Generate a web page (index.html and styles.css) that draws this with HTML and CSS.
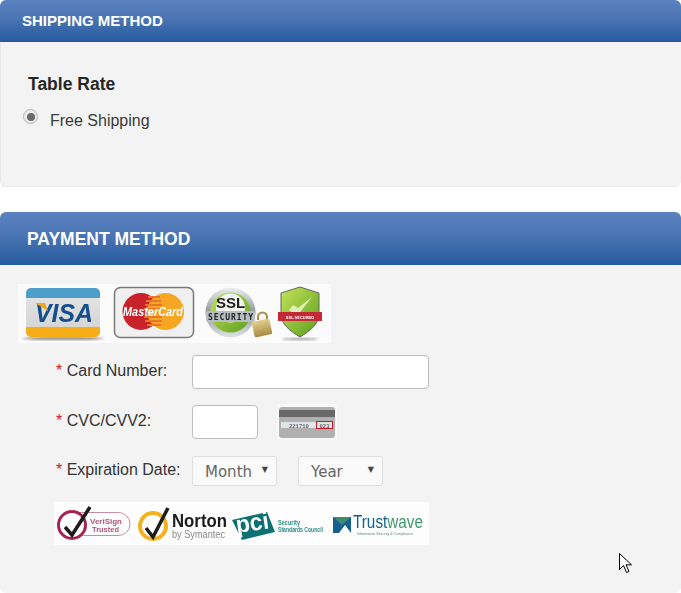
FILE: index.html
```html
<!DOCTYPE html>
<html lang="en">
<head>
<meta charset="utf-8">
<title>Checkout</title>
<link rel="stylesheet" href="styles.css">
</head>
<body>
<section class="panel shipping">
  <h2 class="head head-ship">SHIPPING METHOD</h2>
  <div class="ship-body">
    <h3 class="rate">Table Rate</h3>
    <label class="ship-option"><span class="radio"><span class="radio-dot"></span></span>Free Shipping</label>
  </div>
</section>
<section class="panel payment">
  <h2 class="head head-pay">PAYMENT METHOD</h2>
  <div class="pay-body">
    <svg class="badges" width="313" height="59" viewBox="0 0 313 59">
      <defs>
        <linearGradient id="vg" x1="0" y1="0" x2="0" y2="1"><stop offset="0" stop-color="#e6e6e6"/><stop offset="1" stop-color="#d2d2d2"/></linearGradient>
        <linearGradient id="sg" x1="0" y1="0" x2="1" y2="1"><stop offset="0" stop-color="#c4e45a"/><stop offset="1" stop-color="#5c9e1e"/></linearGradient>
        <linearGradient id="rg" x1="0" y1="0" x2="0" y2="1"><stop offset="0" stop-color="#eef0f0"/><stop offset="0.5" stop-color="#8e979c"/><stop offset="1" stop-color="#dfe3e4"/></linearGradient>
        <linearGradient id="lg" x1="0" y1="0" x2="0" y2="1"><stop offset="0" stop-color="#e4cf8c"/><stop offset="1" stop-color="#a98b45"/></linearGradient>
        <filter id="b1" x="-5%" y="-5%" width="110%" height="110%"><feGaussianBlur stdDeviation="0.4"/></filter>
        <filter id="b2"><feGaussianBlur stdDeviation="1"/></filter>
      </defs>
      <rect width="313" height="59" fill="#fbfbfb"/>
      <ellipse cx="45" cy="54.500" rx="41" ry="1.600" fill="#8c8c8c" filter="url(#b2)"/>
      <g filter="url(#b1)">
        <rect x="8" y="4" width="74" height="49" rx="5" fill="url(#vg)"/>
        <path d="M8 14V9a5 5 0 0 1 5-5h64a5 5 0 0 1 5 5v5z" fill="#4f9dc9"/>
        <path d="M8 43h74v5a5 5 0 0 1-5 5H13a5 5 0 0 1-5-5z" fill="#f6ad16"/>
        <text x="17" y="38" textLength="58" lengthAdjust="spacingAndGlyphs" class="visa">VISA</text>
        <path d="M17 19h10l3 8z" fill="#eda526"/>
        <rect x="96.500" y="3.500" width="79" height="50" rx="6" fill="#f0f0f0" stroke="#7a7a7a" stroke-width="1.500"/>
        <circle cx="123" cy="27.500" r="18.500" fill="#c8202b"/>
        <circle cx="147.500" cy="27.500" r="18.500" fill="#f5a623"/>
        <path d="M130 13h12M128 17h15M127 21h17M126 25h18M126 33h18M127 37h17M129 41h14" stroke="#e8752a" stroke-width="2"/>
        <text x="105" y="32" textLength="60" lengthAdjust="spacingAndGlyphs" class="mc">MasterCard</text>
        <circle cx="212.500" cy="28.500" r="25" fill="url(#rg)"/>
        <circle cx="212.500" cy="28.500" r="20" fill="url(#sg)"/>
        <circle cx="212.500" cy="24" r="14.500" fill="#f2f4f0"/>
        <text x="212.500" y="24" text-anchor="middle" class="ssl">SSL</text>
        <rect x="188" y="27" width="49" height="11" rx="2" fill="#b6bec2"/>
        <text x="190" y="36" textLength="45" class="sec">SECURITY</text>
        <path d="M240 36v-3a4.500 4.500 0 0 1 9 0v3" fill="none" stroke="#a98b45" stroke-width="2"/>
        <rect x="235" y="36" width="18" height="16" rx="2" fill="url(#lg)" transform="rotate(-12 244 44)"/>
        <path d="M263 9l19-6 19 6v21c0 10-9 17-19 23-10-6-19-13-19-23z" fill="url(#sg)" stroke="#5d6a58" stroke-width="1"/>
        <path d="M271 26l8 6 15-19-14 11-5-3z" fill="#e0f0b4"/>
        <path d="M260 28h44v9h-44z" fill="#c32a35"/>
        <text x="282" y="34.500" text-anchor="middle" class="ssltag">SSL SECURED</text>
      </g>
      <ellipse cx="282" cy="55" rx="18" ry="1" fill="#9a9a9a" filter="url(#b2)"/>
    </svg>
    <div class="form-row row-card">
      <label class="field-label"><span class="req">*</span> Card Number:</label>
      <span class="input input-wide"></span>
    </div>
    <div class="form-row row-cvc">
      <label class="field-label"><span class="req">*</span> CVC/CVV2:</label>
      <span class="input input-short"></span>
      <svg class="cvv-card" width="60" height="36" viewBox="0 0 60 36">
        <rect width="60" height="36" fill="#f8f8f8"/>
        <g filter="url(#b1)">
          <rect x="2" y="3" width="56" height="31" rx="3" fill="#b0b0b0"/>
          <rect x="2" y="6" width="56" height="7" fill="#686868"/>
          <rect x="4" y="18" width="35" height="6" fill="#dfe6ea"/>
          <text x="12" y="23.500" class="cvv-num">221710</text>
          <rect x="39.500" y="17.500" width="16" height="7" fill="#e3e3e3" stroke="#c21c2c" stroke-width="1"/>
          <text x="47.500" y="23.500" text-anchor="middle" class="cvv-num">023</text>
        </g>
      </svg>
    </div>
    <div class="form-row row-exp">
      <label class="field-label"><span class="req">*</span> Expiration Date:</label>
      <span class="select select-month">Month<span class="caret">▼</span></span>
      <span class="select select-year">Year<span class="caret">▼</span></span>
    </div>
    <svg class="trust" width="375" height="43" viewBox="0 0 375 43">
      <rect width="375" height="43" fill="#fdfdfd"/>
      <g filter="url(#b1)">
        <rect x="12" y="10.500" width="64" height="23" rx="11.500" fill="#fff" stroke="#c88ca0" stroke-width="1"/>
        <circle cx="18" cy="23" r="13.500" fill="#fff" stroke="#a3264f" stroke-width="3"/>
        <path d="M11 25l7 8 18-28" fill="none" stroke="#1c1c1c" stroke-width="3.500"/>
        <text x="36" y="22" textLength="32" lengthAdjust="spacingAndGlyphs" class="vs">VeriSign</text>
        <text x="38" y="30" textLength="27" lengthAdjust="spacingAndGlyphs" class="vs">Trusted</text>
        <circle cx="99" cy="24" r="13" fill="#fff" stroke="#f4b223" stroke-width="4"/>
        <path d="M92 26l7 9 15-29" fill="none" stroke="#1c1c1c" stroke-width="3.500"/>
        <text x="118" y="25" textLength="55" lengthAdjust="spacingAndGlyphs" class="norton">Norton</text>
        <text x="118" y="36" textLength="53" lengthAdjust="spacingAndGlyphs" class="sym">by Symantec</text>
        <path d="M178 18l35-8 8 20-33 8z" fill="#0f6f72"/>
        <text x="183" y="31" transform="rotate(-8 183 31)" textLength="33" lengthAdjust="spacingAndGlyphs" class="pci">pci</text>
        <text x="224" y="23" textLength="22" lengthAdjust="spacingAndGlyphs" class="ssc">Security</text>
        <text x="224" y="30" textLength="45" lengthAdjust="spacingAndGlyphs" class="ssc">Standards Council</text>
        <rect x="279" y="15" width="18" height="16" fill="#14618f"/>
        <path d="M279 15h18l-9 8z" fill="#3f8a6d"/>
        <path d="M285 31l6-8 6 8z" fill="#fff"/>
        <text x="299" y="26" textLength="70" lengthAdjust="spacingAndGlyphs" class="tw">Trust<tspan class="tw-wave">wave</tspan></text>
        <text x="303" y="33" textLength="56" lengthAdjust="spacingAndGlyphs" class="tw-sub">Information Security &amp; Compliance</text>
      </g>
    </svg>
  </div>
</section>
<svg class="cursor" width="13" height="21" viewBox="0 0 13 21">
  <path d="M0.500 0.500V16.500L4.500 12.500L7.500 19.500L10 18.500L7 11.800H12.500Z" fill="#fff" stroke="#000" stroke-width="1"/>
</svg>
</body>
</html>
```
FILE: styles.css
```css
* {
  box-sizing: border-box;
}

html,
body {
  margin: 0;
  padding: 0;
  height: 593px;
  overflow: hidden;
  background: #fff;
}

body {
  font-family: "Liberation Sans", Arial, sans-serif;
  color: #333;
}

.panel {
  background: #f3f3f3;
  border-radius: 6px;
  overflow: hidden;
}

.shipping {
  height: 187px;
  margin-bottom: 25px;
}

.payment {
  height: 381px;
}

.head {
  margin: 0;
  color: #fff;
  font-weight: 700;
  background: linear-gradient(to bottom, #5c82c0 0%, #4a74b3 45%, #245b9e 100%);
}

.head-ship {
  height: 42px;
  padding: 13px 0 0 22px;
  font-size: 15px;
  line-height: 16px;
}

.head-pay {
  height: 53px;
  padding: 18px 0 0 27px;
  font-size: 17.500px;
  line-height: 18px;
}

.ship-body {
  height: 145px;
  padding: 32px 0 0 22px;
  border-left: 1px solid #e8e8e8;
  border-bottom: 1px solid #e8e8e8;
  border-bottom-left-radius: 6px;
}

.rate {
  margin: 0 0 0 5px;
  font-size: 17.500px;
  line-height: 20px;
  font-weight: 700;
  color: #262626;
}

.ship-option {
  display: flex;
  align-items: flex-start;
  margin-top: 17px;
  font-size: 16px;
  line-height: 20px;
  color: #3a3a3a;
}

.radio {
  display: flex;
  align-items: center;
  justify-content: center;
  width: 15px;
  height: 15px;
  margin: -2px 12px 0 0;
  border: 1px solid #b4b4b4;
  border-radius: 50%;
  background: #ececec;
}

.radio-dot {
  width: 8px;
  height: 8px;
  border-radius: 50%;
  background: #6b6b6b;
}

.pay-body {
  display: flex;
  flex-direction: column;
  align-items: flex-start;
  padding: 19px 0 0 18px;
}

.badges,
.trust,
.cvv-card {
  display: block;
  flex: none;
}

.form-row {
  display: flex;
  align-items: center;
  margin-left: 38px;
}

.row-card {
  margin-top: 12px;
}

.row-cvc {
  margin-top: 15px;
}

.row-exp {
  margin-top: 16px;
}

.field-label {
  width: 136px;
  flex: none;
  padding-bottom: 2px;
  font-size: 16px;
  color: #333;
  white-space: nowrap;
}

.req {
  color: #d0202a;
}

.input {
  display: block;
  height: 34px;
  background: #fff;
  border: 1px solid #bcbcbc;
  border-radius: 4px;
}

.input-wide {
  width: 237px;
}

.input-short {
  width: 66px;
}

.cvv-card {
  margin-left: 19px;
}

.select {
  position: relative;
  display: block;
  height: 30px;
  padding: 6px 0 0 12px;
  font-family: "DejaVu Sans", sans-serif;
  font-size: 15px;
  line-height: 18px;
  color: #666;
  background: #fafafa;
  border: 1px solid #dedede;
  border-radius: 3px;
}

.select-month {
  width: 85px;
  margin-right: 21px;
}

.select-year {
  width: 85px;
}

.caret {
  position: absolute;
  top: 4px;
  right: 8px;
  font-family: "DejaVu Sans", sans-serif;
  font-size: 8px;
  color: #444;
}

.trust {
  margin: 16px 0 0 36px;
}

.cursor {
  position: absolute;
  left: 619px;
  top: 553px;
}

.visa {
  font: italic 700 25px "Liberation Sans", sans-serif;
  fill: #12508f;
}

.mc {
  font: italic 700 13px "Liberation Sans", sans-serif;
  fill: #fff;
}

.ssl {
  font: 700 15px "Liberation Sans", sans-serif;
  fill: #222;
}

.sec {
  font: 700 8px "DejaVu Sans Mono", monospace;
  fill: #222;
}

.ssltag {
  font: 700 4px "Liberation Sans", sans-serif;
  fill: #fff;
}

.cvv-num {
  font: 700 5.500px "Liberation Mono", monospace;
  fill: #666;
}

.vs {
  font: 700 8px "Liberation Sans", sans-serif;
  fill: #b2507a;
}

.norton {
  font: 700 18.500px "Liberation Sans", sans-serif;
  fill: #1c1c1c;
}

.sym {
  font: 10px "Liberation Sans", sans-serif;
  fill: #8a8a8a;
}

.pci {
  font: 700 24px "Liberation Sans", sans-serif;
  fill: #fff;
}

.ssc {
  font: 700 6.500px "Liberation Sans", sans-serif;
  fill: #2d8a8a;
}

.tw {
  font: 18px "Liberation Sans", sans-serif;
  fill: #14618f;
}

.tw-wave {
  fill: #3f9a6d;
}

.tw-sub {
  font: 4px "Liberation Sans", sans-serif;
  fill: #5b8a7a;
}
```
